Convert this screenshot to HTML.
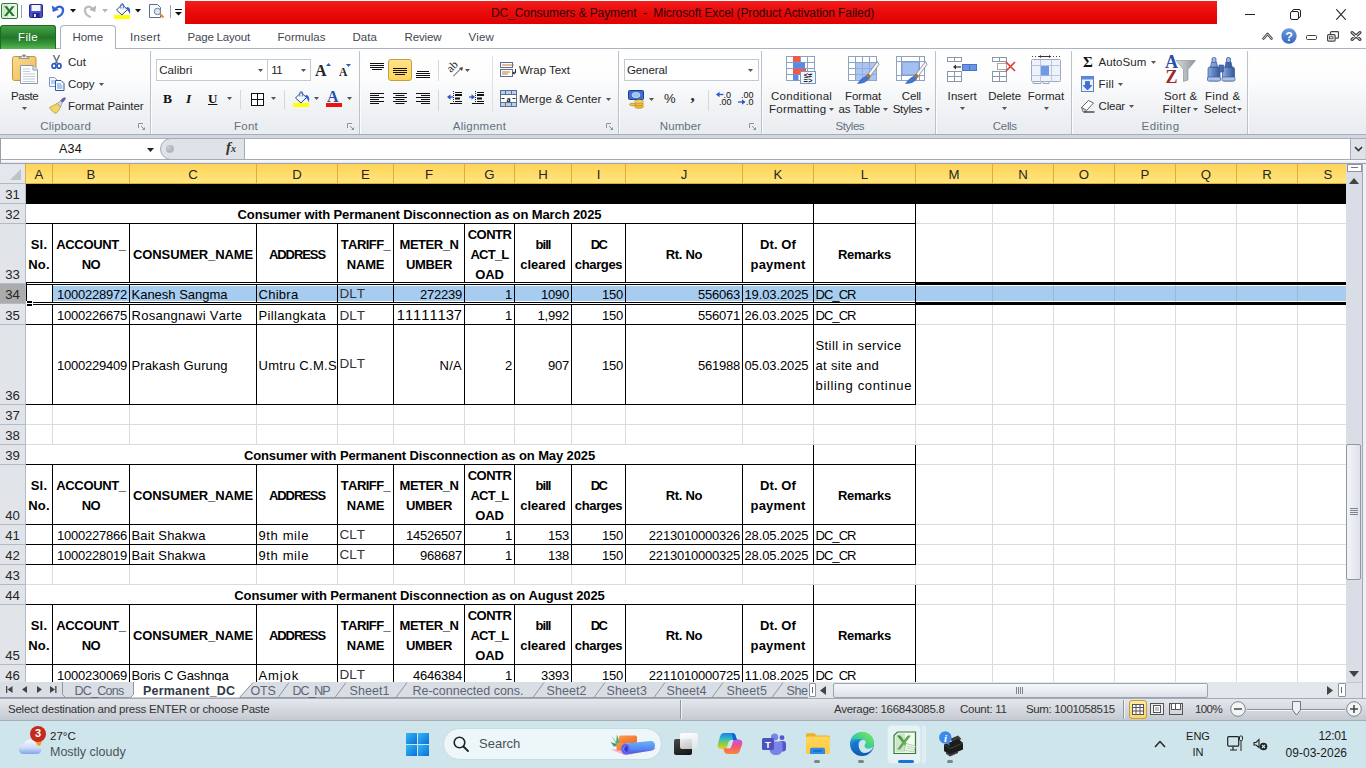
<!DOCTYPE html><html><head><meta charset="utf-8"><title>DC_Consumers &amp; Payment - Microsoft Excel</title><style>
*{box-sizing:border-box;margin:0;padding:0}
html,body{width:1366px;height:768px;overflow:hidden;background:#fff}
body{position:relative;font-family:"Liberation Sans",sans-serif;font-size:12px;color:#1e1e1e}
.a{position:absolute}
.t{position:absolute;white-space:nowrap;line-height:1}
.u{position:absolute;white-space:nowrap;line-height:14px;height:14px;font-size:11.5px;letter-spacing:-0.25px;color:#262626}
.gl2{position:absolute;top:51px;width:2px;height:83px;background:linear-gradient(90deg,#bcc2cb 50%,#fbfcfd 50%)}
.c{position:absolute;font-kerning:none;display:flex;align-items:flex-end;font-size:13px;color:#000;white-space:nowrap;overflow:hidden;line-height:16px;padding-bottom:0}
.c.n{letter-spacing:-0.22px}
.c.x{letter-spacing:0.28px}
.c.r{justify-content:flex-end;padding-right:2px}
.c.l{justify-content:flex-start;padding-left:1.5px}
.c.m{align-items:center;padding-bottom:0;padding-top:2px}
.c.h{align-items:center;justify-content:center;text-align:center;font-weight:bold;white-space:normal;line-height:20px;padding-top:2px;font-size:13px;letter-spacing:-0.18px}
.c.tt{justify-content:center;font-weight:bold;font-size:13px;letter-spacing:-0.11px}
.c.ar{color:#333;font-size:13.5px;letter-spacing:0}
.rh{position:absolute;left:0;width:25px;display:flex;align-items:flex-end;justify-content:center;font-size:13.2px;color:#262626;line-height:15px;padding-bottom:1px}
.ch{position:absolute;top:164px;height:20px;display:flex;align-items:center;justify-content:center;font-size:13.2px;color:#262626;border-right:1px solid #e5a83a;border-bottom:1px solid #e5a83a;background:linear-gradient(#ffd358,#ffdc6b 50%,#ffe57f);padding-top:2px}
.gl{position:absolute;background:#d9dbdf}
.bl{position:absolute;background:#000}
</style></head><body>
<div class="a" style="left:0;top:0;width:1366px;height:25px;background:#fff"></div>
<div class="a" style="left:185px;top:1px;width:1032px;height:23px;background:linear-gradient(#f21d1d,#ea0c0c 45%,#e00000)"></div>
<div class="t" style="left:491px;top:7px;font-size:12px;color:#2a0606;letter-spacing:-0.09px;white-space:pre">DC_Consumers &amp; Payment  -  Microsoft Excel (Product Activation Failed)</div>
<svg class="a" style="left:1px;top:3px" width="17" height="16" viewBox="0 0 17 16"><rect x="0.5" y="0.5" width="16" height="15" rx="1.5" fill="#e9f3e6" stroke="#2f7d32"/><rect x="1.5" y="1.5" width="6" height="13" fill="#cfe5c9"/><path d="M3.2 3.2L7 8 3 13h2.8L8.4 9.6 11 13h2.8L9.9 8l3.7-4.8h-2.8L8.4 6.4 6 3.2z" fill="#1f7a2a"/></svg>
<div class="a" style="left:21px;top:5px;width:1px;height:13px;background:#9aa3ad"></div>
<svg class="a" style="left:29px;top:4px" width="14" height="14" viewBox="0 0 14 14"><rect x="0.5" y="0.5" width="13" height="13" rx="1" fill="#4a4fc4" stroke="#23278a"/><rect x="2.5" y="1" width="9" height="6" fill="#f4f4fb"/><rect x="3.5" y="9" width="7" height="4.5" fill="#23278a"/><rect x="5" y="10" width="2" height="3" fill="#dfe0f5"/></svg>
<svg class="a" style="left:51px;top:3px" width="15" height="15" viewBox="0 0 15 15"><path d="M4.500 6C7 2.500 12.500 3 12 8c-.3 2.800-2.500 4.800-5 5.800" fill="none" stroke="#2f66d4" stroke-width="2.300" stroke-linecap="round"/><path d="M.8 2.500l1 6.500 6-2.200z" fill="#2f66d4"/></svg>
<svg class="a" style="left:70px;top:9px" width="6" height="4"><path d="M0 0h6L3 3.500z" fill="#111"/></svg>
<svg class="a" style="left:82px;top:3px" width="15" height="15" viewBox="0 0 15 15"><path d="M10.500 6C8 2.500 2.500 3 3 8c.3 2.800 2.500 4.800 5 5.800" fill="none" stroke="#bdbdbd" stroke-width="2.300" stroke-linecap="round"/><path d="M14.200 2.500l-1 6.500-6-2.200z" fill="#b5b5b5"/></svg>
<svg class="a" style="left:102px;top:9px" width="6" height="4"><path d="M0 0h6L3 3.500z" fill="#b5b5b5"/></svg>
<svg class="a" style="left:114px;top:2px" width="17" height="17" viewBox="0 0 17 17"><defs><linearGradient id="bk1" x1="0" y1="0" x2="1" y2="1"><stop offset="0" stop-color="#fff"/><stop offset=".6" stop-color="#f4f7fc"/><stop offset="1" stop-color="#9db8e6"/></linearGradient></defs><rect x="0" y="13" width="16" height="4" fill="#ffff00"/><path d="M2.500 8L8 2.500l5.500 5L8 13z" fill="url(#bk1)" stroke="#2b4a8a" stroke-width="1"/><path d="M7 6.500C5.500 2.500 8 .5 9.500 2.500c.8 1.200 0 2.500-.5 4" fill="none" stroke="#5a78aa" stroke-width="1.100"/><path d="M12.500 5c3-.5 4.500 2.500 3.300 7.500-.5-2-1.300-3-2.300-4.200z" fill="#2f62d0"/></svg>
<svg class="a" style="left:135px;top:9px" width="6" height="4"><path d="M0 0h6L3 3.5z" fill="#111"/></svg>
<svg class="a" style="left:149px;top:4px" width="16" height="15" viewBox="0 0 16 15"><path d="M.5.500h8l3 3v10h-11z" fill="#fdfdfd" stroke="#5a6d8c"/><circle cx="8.500" cy="7.500" r="3.200" fill="#dbe9f7" stroke="#6c7f9c"/><path d="M11 10l3.500 3.500" stroke="#d9902f" stroke-width="2"/></svg>
<div class="a" style="left:170px;top:5px;width:1px;height:13px;background:#9aa3ad"></div>
<div class="a" style="left:175px;top:9px;width:7px;height:1px;background:#111"></div>
<svg class="a" style="left:175px;top:12px" width="7" height="4"><path d="M0 0h7L3.5 3.500z" fill="#111"/></svg>
<div class="a" style="left:1245px;top:14px;width:10px;height:1px;background:#222"></div>
<svg class="a" style="left:1289.5px;top:8.5px" width="11" height="11" viewBox="0 0 11 11"><rect x="0.5" y="2.5" width="8" height="8" rx="1.5" fill="none" stroke="#222"/><path d="M2.5 2.5V2A1.500 1.500 0 014 .5h5A1.500 1.500 0 0110.500 2v5A1.500 1.500 0 019 8.500H8.500" fill="none" stroke="#222"/></svg>
<svg class="a" style="left:1336px;top:8.500px" width="10" height="11" viewBox="0 0 10 11"><path d="M.3.300l9.400 10.400M9.700.300L.300 10.700" stroke="#222" stroke-width="1.100"/></svg>
<div class="a" style="left:0;top:25px;width:1366px;height:23px;background:#fff"></div>
<div class="a" style="left:0;top:48px;width:1366px;height:1px;background:#aab3c0"></div>
<div class="a" style="left:0;top:25px;width:56px;height:24px;border-radius:3px 3px 0 0;background:linear-gradient(#47a047 0%,#2f8a33 30%,#23782a 50%,#35933a 75%,#5cb84f 100%);border:1px solid #1d6a22;border-bottom:none"></div>
<div class="u" style="left:18.0px;top:30px;font-size:11.5px;letter-spacing:0.37px;color:#fff">File</div>
<div class="a" style="left:60px;top:25px;width:56px;height:24px;border:1px solid #aab3c0;border-bottom:none;border-radius:4px 4px 0 0;background:#fff"></div>
<div class="u" style="left:72.5px;top:30px;font-size:11.5px;letter-spacing:-0.04px;color:#3f4752">Home</div>
<div class="u" style="left:130.0px;top:30px;font-size:11.5px;letter-spacing:0.29px;color:#3f4752">Insert</div>
<div class="u" style="left:187.5px;top:30px;font-size:11.5px;letter-spacing:-0.19px;color:#3f4752">Page Layout</div>
<div class="u" style="left:277.5px;top:30px;font-size:11.5px;letter-spacing:0.01px;color:#3f4752">Formulas</div>
<div class="u" style="left:352.5px;top:30px;font-size:11.5px;letter-spacing:0.05px;color:#3f4752">Data</div>
<div class="u" style="left:404.5px;top:30px;font-size:11.5px;letter-spacing:-0.12px;color:#3f4752">Review</div>
<div class="u" style="left:468.5px;top:30px;font-size:11.5px;letter-spacing:0.20px;color:#3f4752">View</div>
<svg class="a" style="left:1262px;top:32px" width="11" height="9" viewBox="0 0 11 9"><path d="M1.500 6.500L5.500 2l4 4.500" fill="none" stroke="#444" stroke-width="2.600" stroke-linejoin="round" stroke-linecap="round"/><path d="M1.500 6.500L5.500 2l4 4.500" fill="none" stroke="#fff" stroke-width=".8" stroke-linejoin="round" stroke-linecap="round"/></svg>
<svg class="a" style="left:1281px;top:28px" width="16" height="16" viewBox="0 0 16 16"><defs><linearGradient id="hg" x1="0" y1="0" x2="0" y2="1"><stop offset="0" stop-color="#6b9be0"/><stop offset="1" stop-color="#3468c0"/></linearGradient></defs><circle cx="8" cy="8" r="7.700" fill="url(#hg)"/><text x="8" y="12.500" font-family="Liberation Sans,sans-serif" font-size="12.500" font-weight="bold" fill="#fff" text-anchor="middle">?</text></svg>
<div class="a" style="left:1306px;top:35px;width:11px;height:5px;border:1.300px solid #444;border-radius:1.500px"></div>
<svg class="a" style="left:1327px;top:31px" width="12" height="11" viewBox="0 0 12 11"><rect x="0.600" y="3.600" width="7.500" height="6.500" rx="1" fill="#fff" stroke="#444" stroke-width="1.200"/><path d="M3.500 3.500V1.600a1 1 0 011-1h6a1 1 0 011 1v4.500a1 1 0 01-1 1H8.500" fill="none" stroke="#444" stroke-width="1.200"/><rect x="2.500" y="5.800" width="3.500" height="2" fill="none" stroke="#444" stroke-width=".9"/></svg>
<svg class="a" style="left:1350px;top:31px" width="12" height="10" viewBox="0 0 12 10"><path d="M2 1.500l8 7M10 1.500l-8 7" stroke="#444" stroke-width="3" stroke-linecap="round"/><path d="M2 1.500l8 7M10 1.500l-8 7" stroke="#fff" stroke-width=".9" stroke-linecap="round"/></svg>
<div class="a" style="left:0;top:49px;width:1366px;height:86px;background:linear-gradient(#fff 0%,#fdfdfe 35%,#f2f4f6 62%,#e9ecf0 100%)"></div>
<div class="a" style="left:0;top:134px;width:1366px;height:1px;background:#a7aeb9"></div>
<div class="a" style="left:0;top:135px;width:1366px;height:2px;background:#dfe3e9"></div>
<div class="gl2" style="left:150px"></div>
<div class="gl2" style="left:359px"></div>
<div class="gl2" style="left:618px"></div>
<div class="gl2" style="left:761px"></div>
<div class="gl2" style="left:935px"></div>
<div class="gl2" style="left:1071px"></div>
<div class="gl2" style="left:1247px"></div>
<div class="u" style="left:40.3px;top:119px;font-size:11.5px;letter-spacing:0.16px;color:#66707f">Clipboard</div>
<div class="u" style="left:234.1px;top:119px;font-size:11.5px;letter-spacing:0.20px;color:#66707f">Font</div>
<div class="u" style="left:452.7px;top:119px;font-size:11.5px;letter-spacing:0.27px;color:#66707f">Alignment</div>
<div class="u" style="left:659.8px;top:119px;font-size:11.5px;letter-spacing:0.07px;color:#66707f">Number</div>
<div class="u" style="left:835.4px;top:119px;font-size:11.5px;letter-spacing:-0.42px;color:#66707f">Styles</div>
<div class="u" style="left:992.8px;top:119px;font-size:11.5px;letter-spacing:-0.31px;color:#66707f">Cells</div>
<div class="u" style="left:1141.6px;top:119px;font-size:11.5px;letter-spacing:0.38px;color:#66707f">Editing</div>
<svg class="a" style="left:138px;top:123px" width="8" height="8" viewBox="0 0 8 8"><path d="M.500 5V.500H5" fill="none" stroke="#8a93a0"/><path d="M3 3l3.500 3.500" stroke="#8a93a0"/><path d="M7 4v3H4z" fill="#8a93a0"/></svg>
<svg class="a" style="left:347px;top:123px" width="8" height="8" viewBox="0 0 8 8"><path d="M.500 5V.500H5" fill="none" stroke="#8a93a0"/><path d="M3 3l3.500 3.500" stroke="#8a93a0"/><path d="M7 4v3H4z" fill="#8a93a0"/></svg>
<svg class="a" style="left:606px;top:123px" width="8" height="8" viewBox="0 0 8 8"><path d="M.500 5V.500H5" fill="none" stroke="#8a93a0"/><path d="M3 3l3.500 3.500" stroke="#8a93a0"/><path d="M7 4v3H4z" fill="#8a93a0"/></svg>
<svg class="a" style="left:749px;top:123px" width="8" height="8" viewBox="0 0 8 8"><path d="M.500 5V.500H5" fill="none" stroke="#8a93a0"/><path d="M3 3l3.500 3.500" stroke="#8a93a0"/><path d="M7 4v3H4z" fill="#8a93a0"/></svg>
<svg class="a" style="left:11px;top:53px" width="28" height="32" viewBox="0 0 28 32"><defs><linearGradient id="cbg" x1="0" y1="0" x2="1" y2="1"><stop offset="0" stop-color="#fbdc90"/><stop offset="1" stop-color="#efb754"/></linearGradient></defs><rect x="1.500" y="3.500" width="23.500" height="24" rx="2" fill="url(#cbg)" stroke="#c9963c"/><path d="M8 5.500V4h2.500c0-3 5-3 5 0H18v1.500z" fill="#e3e6ea" stroke="#7c8694" stroke-width=".8"/><circle cx="13" cy="3" r=".9" fill="#8a5a2a"/><path d="M9.500 12.500h12.500l4.500 4.500v13.500h-17z" fill="#fdfdfe" stroke="#8a97a8"/><path d="M22 12.500v4.500h4.500" fill="#e4e9f0" stroke="#8a97a8"/><path d="M12 16h7M12 18.500h7M12 21h12M12 23.500h12M12 26h12M12 28.500h12" stroke="#b9c6d6" stroke-width=".9"/></svg>
<div class="u" style="left:10.9px;top:89px;font-size:11.5px;letter-spacing:-0.40px;">Paste</div>
<svg class="a" style="left:22px;top:107px" width="5" height="3"><path d="M0 0h5L2.500 3z" fill="#555"/></svg>
<svg class="a" style="left:51px;top:55px" width="11" height="14" viewBox="0 0 11 14"><path d="M2.500 0L6.500 8.500M8.500 0L4.500 8.500" stroke="#6a737e" stroke-width="1.500" fill="none"/><ellipse cx="3" cy="11" rx="2" ry="2.300" fill="none" stroke="#2b57c4" stroke-width="1.700"/><ellipse cx="8" cy="11" rx="2" ry="2.300" fill="none" stroke="#2b57c4" stroke-width="1.700"/></svg>
<div class="u" style="left:68.0px;top:55px;font-size:11.5px;letter-spacing:0.07px;">Cut</div>
<svg class="a" style="left:49px;top:76px" width="16" height="16" viewBox="0 0 16 16"><path d="M.500 1.500h5l2.500 2.500v6.500h-7.500z" fill="#f4f8fd" stroke="#7f97c4"/><path d="M2 5h4M2 7h4" stroke="#7fa5e0"/><path d="M6.500 4.500h5.500l3 3v7h-8.500z" fill="#fff" stroke="#2b57a4"/><path d="M8 8h4M8 10h5.500M8 12h5.500" stroke="#5f8fdc"/></svg>
<div class="u" style="left:68.0px;top:77px;font-size:11.5px;letter-spacing:-0.09px;">Copy</div>
<svg class="a" style="left:99px;top:83px" width="5" height="3"><path d="M0 0h5L2.500 3z" fill="#555"/></svg>
<svg class="a" style="left:49px;top:97px" width="17" height="17" viewBox="0 0 17 17"><path d="M16.500 1c-1.500-.8-3 .2-5 3l1.800 1.500c1.700-1.500 3-2.800 3.200-4.500z" fill="#6a5fb0" stroke="#4e4580" stroke-width=".5"/><path d="M11.500 4L8 6.500l3.500 3.500L13.300 5.500z" fill="#d4d7dc" stroke="#7d838c" stroke-width=".6"/><path d="M8 6.500L.500 10.500c1.500 3 4 5 6.500 6 2-2 3.500-4 4.500-6.500z" fill="#f0d66a" stroke="#b0902a" stroke-width=".7"/></svg>
<div class="u" style="left:68.0px;top:99px;font-size:11.5px;letter-spacing:-0.03px;">Format Painter</div>
<div class="a" style="left:156px;top:59px;width:112px;height:22px;background:#fff;border:1px solid #c3cad4"></div>
<div class="a" style="left:267px;top:59px;width:44px;height:22px;background:#fff;border:1px solid #c3cad4"></div>
<div class="u" style="left:159.2px;top:63px;font-size:11.5px;letter-spacing:0.07px;">Calibri</div>
<svg class="a" style="left:258px;top:69px" width="5" height="3"><path d="M0 0h5L2.500 3z" fill="#555"/></svg>
<div class="u" style="left:271.3px;top:63px;font-size:11.5px;letter-spacing:-0.62px;">11</div>
<svg class="a" style="left:301px;top:69px" width="5" height="3"><path d="M0 0h5L2.500 3z" fill="#555"/></svg>
<div class="t" style="left:315px;top:63px;font-family:'Liberation Serif',serif;font-weight:bold;font-size:16px;color:#222">A</div>
<svg class="a" style="left:325.5px;top:63px" width="5" height="3" viewBox="0 0 5 3"><path d="M0 3h5L2.500 0z" fill="#2b57c4"/></svg>
<div class="t" style="left:339px;top:67px;font-family:'Liberation Serif',serif;font-weight:bold;font-size:11.5px;color:#222">A</div>
<svg class="a" style="left:346px;top:64px" width="5" height="3" viewBox="0 0 5 3"><path d="M0 0h5L2.500 3z" fill="#2b57c4"/></svg>
<div class="t" style="left:163px;top:92px;font-family:'Liberation Serif',serif;font-weight:bold;font-size:13.5px;color:#111">B</div>
<div class="t" style="left:186px;top:92px;font-family:'Liberation Serif',serif;font-style:italic;font-weight:bold;font-size:13.5px;color:#111">I</div>
<div class="t" style="left:208px;top:92px;font-family:'Liberation Serif',serif;font-weight:bold;font-size:13px;color:#111;text-decoration:underline">U</div>
<svg class="a" style="left:227px;top:97px" width="5" height="3"><path d="M0 0h5L2.500 3z" fill="#555"/></svg>
<div class="a" style="left:240px;top:90px;width:1px;height:19px;background:#d3d8df"></div>
<svg class="a" style="left:251px;top:93px" width="13" height="13" viewBox="0 0 13 13"><rect x="0.500" y="0.500" width="12" height="12" fill="#fff" stroke="#111"/><path d="M6.500 0v13M0 6.500h13" stroke="#111"/></svg>
<svg class="a" style="left:271px;top:97px" width="5" height="3"><path d="M0 0h5L2.500 3z" fill="#555"/></svg>
<div class="a" style="left:284px;top:90px;width:1px;height:19px;background:#d3d8df"></div>
<svg class="a" style="left:293px;top:90px" width="17" height="17" viewBox="0 0 17 17"><defs><linearGradient id="bk2" x1="0" y1="0" x2="1" y2="1"><stop offset="0" stop-color="#fff"/><stop offset=".6" stop-color="#f4f7fc"/><stop offset="1" stop-color="#9db8e6"/></linearGradient></defs><rect x="0" y="13" width="16" height="4" fill="#ffff00"/><path d="M2.500 8L8 2.500l5.500 5L8 13z" fill="url(#bk2)" stroke="#2b4a8a" stroke-width="1"/><path d="M7 6.500C5.500 2.500 8 .5 9.500 2.500c.8 1.200 0 2.500-.5 4" fill="none" stroke="#5a78aa" stroke-width="1.100"/><path d="M12.500 5c3-.5 4.500 2.500 3.300 7.500-.5-2-1.300-3-2.300-4.200z" fill="#2f62d0"/></svg>
<svg class="a" style="left:314px;top:97px" width="5" height="3"><path d="M0 0h5L2.500 3z" fill="#555"/></svg>
<div class="t" style="left:327px;top:89px;font-family:'Liberation Serif',serif;font-weight:bold;font-size:16px;color:#2b4fa8">A</div>
<div class="a" style="left:326px;top:103px;width:16px;height:4px;background:#ee1111"></div>
<svg class="a" style="left:347px;top:97px" width="5" height="3"><path d="M0 0h5L2.500 3z" fill="#555"/></svg>
<div class="a" style="left:388px;top:59px;width:24px;height:22px;border:1px solid #c2a03c;border-radius:3px;background:linear-gradient(#ffe38c,#ffd356)"></div>
<svg class="a" style="left:370px;top:63px" width="14" height="8" viewBox="0 0 14 8"><rect x="0" y="0" width="14" height="1" fill="#111"/><rect x="0" y="2" width="14" height="1" fill="#111"/><rect x="0" y="4" width="14" height="1" fill="#111"/><rect x="2.0" y="6" width="10" height="1" fill="#111"/></svg>
<svg class="a" style="left:393px;top:67.5px" width="14" height="8" viewBox="0 0 14 8"><rect x="0" y="0" width="14" height="1" fill="#111"/><rect x="0" y="2" width="14" height="1" fill="#111"/><rect x="0" y="4" width="14" height="1" fill="#111"/><rect x="2.0" y="6" width="10" height="1" fill="#111"/></svg>
<svg class="a" style="left:416px;top:70.5px" width="14" height="8" viewBox="0 0 14 8"><rect x="1.0" y="0" width="12" height="1" fill="#111"/><rect x="0" y="2" width="14" height="1" fill="#111"/><rect x="0" y="4" width="14" height="1" fill="#111"/><rect x="0" y="6" width="14" height="1" fill="#111"/></svg>
<div class="a" style="left:438px;top:60px;width:1px;height:21px;background:#d3d8df"></div>
<div class="t" style="left:447px;top:61px;font-size:11.5px;color:#222;transform:rotate(-45deg);font-family:'Liberation Serif',serif">ab</div>
<svg class="a" style="left:453px;top:67px" width="11" height="10" viewBox="0 0 11 10"><path d="M0 9.500L8 1.500" stroke="#444"/><path d="M10 0L6 1 9 4z" fill="#444"/></svg>
<svg class="a" style="left:465px;top:69px" width="5" height="3"><path d="M0 0h5L2.500 3z" fill="#555"/></svg>
<svg class="a" style="left:370px;top:93px" width="14" height="12" viewBox="0 0 14 12"><rect x="0" y="0" width="14" height="1" fill="#111"/><rect x="0" y="2" width="9" height="1" fill="#111"/><rect x="0" y="4" width="14" height="1" fill="#111"/><rect x="0" y="6" width="9" height="1" fill="#111"/><rect x="0" y="8" width="14" height="1" fill="#111"/><rect x="0" y="10" width="9" height="1" fill="#111"/></svg>
<svg class="a" style="left:393px;top:93px" width="14" height="12" viewBox="0 0 14 12"><rect x="0.0" y="0" width="14" height="1" fill="#111"/><rect x="2.5" y="2" width="9" height="1" fill="#111"/><rect x="0.0" y="4" width="14" height="1" fill="#111"/><rect x="2.5" y="6" width="9" height="1" fill="#111"/><rect x="0.0" y="8" width="14" height="1" fill="#111"/><rect x="2.5" y="10" width="9" height="1" fill="#111"/></svg>
<svg class="a" style="left:416px;top:93px" width="14" height="12" viewBox="0 0 14 12"><rect x="0" y="0" width="14" height="1" fill="#111"/><rect x="5" y="2" width="9" height="1" fill="#111"/><rect x="0" y="4" width="14" height="1" fill="#111"/><rect x="5" y="6" width="9" height="1" fill="#111"/><rect x="0" y="8" width="14" height="1" fill="#111"/><rect x="5" y="10" width="9" height="1" fill="#111"/></svg>
<div class="a" style="left:438px;top:90px;width:1px;height:21px;background:#d3d8df"></div>
<svg class="a" style="left:447px;top:91px" width="16" height="14" viewBox="0 0 16 14"><rect x="8" y="1" width="7" height="1" fill="#111"/><rect x="8" y="3" width="7" height="2" fill="#111"/><rect x="8" y="6.500" width="5" height="2" fill="#111"/><rect x="8" y="10" width="7" height="1" fill="#111"/><rect x="3" y="12" width="12" height="1" fill="#111"/><path d="M6.500 0v14" stroke="#222" stroke-dasharray="1 1"/><path d="M6 6H2" stroke="#2b57c4" stroke-width="1.300"/><path d="M0 6l3.500-2.800v5.600z" fill="#2b57c4"/></svg>
<svg class="a" style="left:469px;top:91px" width="16" height="14" viewBox="0 0 16 14"><rect x="8" y="1" width="7" height="1" fill="#111"/><rect x="8" y="3" width="7" height="2" fill="#111"/><rect x="8" y="6.500" width="5" height="2" fill="#111"/><rect x="8" y="10" width="7" height="1" fill="#111"/><rect x="3" y="12" width="12" height="1" fill="#111"/><path d="M6.500 0v14" stroke="#222" stroke-dasharray="1 1"/><path d="M0 6h4" stroke="#2b57c4" stroke-width="1.300"/><path d="M6 6L2.500 3.200v5.600z" fill="#2b57c4"/></svg>
<div class="a" style="left:492px;top:56px;width:1px;height:56px;background:#dde1e7"></div>
<svg class="a" style="left:500px;top:61px" width="17" height="17" viewBox="0 0 17 17"><rect x="0.500" y="1.500" width="12" height="5" fill="#fff" stroke="#5b6f93"/><rect x="0.500" y="8.500" width="12" height="7" fill="#fff" stroke="#5b6f93"/><path d="M2 4h12M2 11h8M2 13h6" stroke="#c77a2a"/><path d="M15.500 8v4h-2" fill="none" stroke="#333"/><path d="M12 12l2.500-1.800v3.600z" fill="#333"/></svg>
<div class="u" style="left:518.9px;top:63px;font-size:11.5px;letter-spacing:-0.04px;">Wrap Text</div>
<svg class="a" style="left:500px;top:90px" width="17" height="17" viewBox="0 0 17 17"><rect x="0.500" y="0.500" width="16" height="16" fill="#b9cff2" stroke="#5b6f93"/><path d="M0 4.500h17M0 12.500h17M5.500 0v4M11.500 0v4M5.500 13v4M11.500 13v4" stroke="#5b6f93"/><rect x="1" y="5" width="15" height="7" fill="#fff"/><text x="8.500" y="11.500" font-family="Liberation Serif,serif" font-weight="bold" font-size="8" text-anchor="middle" fill="#111">a</text><path d="M1.500 8.500h3M15.500 8.500h-3" stroke="#333"/></svg>
<div class="u" style="left:518.9px;top:92px;font-size:11.5px;letter-spacing:0.10px;">Merge &amp; Center</div>
<svg class="a" style="left:606px;top:98px" width="5" height="3"><path d="M0 0h5L2.500 3z" fill="#555"/></svg>
<div class="a" style="left:624px;top:59px;width:135px;height:22px;background:#fff;border:1px solid #c3cad4"></div>
<div class="u" style="left:626.9px;top:63px;font-size:11.5px;letter-spacing:-0.07px;">General</div>
<svg class="a" style="left:748px;top:69px" width="5" height="3"><path d="M0 0h5L2.500 3z" fill="#555"/></svg>
<svg class="a" style="left:628px;top:90px" width="17" height="19" viewBox="0 0 17 19"><rect x="0.500" y="0.500" width="15" height="9" rx="1" fill="#3f6fd0" stroke="#1f3f8a"/><ellipse cx="8" cy="5" rx="4" ry="2.600" fill="#9cc0f0" stroke="#e8f0fb" stroke-width=".6"/><ellipse cx="11" cy="16.500" rx="4.500" ry="1.800" fill="#f0c040" stroke="#a87b10" stroke-width=".6"/><ellipse cx="11" cy="14" rx="4.500" ry="1.800" fill="#f0c040" stroke="#a87b10" stroke-width=".6"/><ellipse cx="11" cy="11.500" rx="4.500" ry="1.800" fill="#f6d56a" stroke="#a87b10" stroke-width=".6"/><ellipse cx="4.500" cy="14.500" rx="3" ry="1.300" fill="#f0c040" stroke="#a87b10" stroke-width=".6"/></svg>
<svg class="a" style="left:649px;top:98px" width="5" height="3"><path d="M0 0h5L2.500 3z" fill="#555"/></svg>
<div class="u" style="left:664px;top:92px;font-size:13px;color:#222">%</div>
<div class="u" style="left:690.5px;top:89px;font-size:17px;font-weight:bold;color:#222;font-family:'Liberation Serif',serif">,</div>
<div class="a" style="left:708px;top:90px;width:1px;height:21px;background:#d3d8df"></div>
<svg class="a" style="left:716px;top:91px" width="18" height="15" viewBox="0 0 18 15"><path d="M2.500 3.500h5" stroke="#2b57c4" stroke-width="1.300"/><path d="M0 3.500l3.500-2.800v5.600z" fill="#2b57c4"/><text x="7.500" y="7" font-family="Liberation Sans,sans-serif" font-size="9" fill="#111">.0</text><text x="3" y="14" font-family="Liberation Sans,sans-serif" font-size="9" fill="#111">.00</text></svg>
<svg class="a" style="left:738px;top:91px" width="18" height="15" viewBox="0 0 18 15"><text x="3" y="7" font-family="Liberation Sans,sans-serif" font-size="9" fill="#111">.00</text><path d="M0 11h5" stroke="#2b57c4" stroke-width="1.300"/><path d="M7.500 11L4 8.200v5.600z" fill="#2b57c4"/><text x="8" y="14" font-family="Liberation Sans,sans-serif" font-size="9" fill="#111">.0</text></svg>
<svg class="a" style="left:786px;top:56px" width="32" height="30" viewBox="0 0 32 30"><rect x="0.500" y="0.500" width="28" height="24" fill="#fff" stroke="#8ea2c2"/><path d="M0 6.500h29M0 12.500h29M0 18.500h29M7.500 0v25M14.500 0v25M21.500 0v25" stroke="#8ea2c2"/><rect x="7" y="0" width="7" height="6" fill="#ee5a4a"/><rect x="7" y="6.500" width="12" height="6" fill="#5b8ae6"/><rect x="7" y="12.500" width="13" height="6" fill="#ee5a4a"/><rect x="7" y="18.500" width="5.500" height="6" fill="#5b8ae6"/><rect x="14.500" y="15.500" width="15" height="12" fill="#f2f6fc" stroke="#7a96c4"/><text x="22" y="21.800" font-family="Liberation Sans,sans-serif" font-size="7.500" font-weight="bold" text-anchor="middle" fill="#222">≤≠</text><text x="22" y="27" font-family="Liberation Sans,sans-serif" font-size="7.500" font-weight="bold" text-anchor="middle" fill="#222">=&gt;</text></svg>
<div class="u" style="left:770.9px;top:89px;font-size:11.5px;letter-spacing:0.35px;">Conditional</div>
<div class="u" style="left:769.0px;top:102px;font-size:11.5px;letter-spacing:0.23px;">Formatting</div>
<svg class="a" style="left:829px;top:108px" width="5" height="3"><path d="M0 0h5L2.500 3z" fill="#555"/></svg>
<svg class="a" style="left:848px;top:56px" width="32" height="30" viewBox="0 0 32 30"><rect x="0.500" y="0.500" width="28" height="24" fill="#fff" stroke="#8ea2c2"/><path d="M0 6.500h29M0 12.500h29M0 18.500h29M7.500 0v25M14.500 0v25M21.500 0v25" stroke="#8ea2c2"/><rect x="8" y="7" width="20" height="17.500" fill="#8fb0ee" opacity=".75"/><path d="M29.500 5.500L20 18l2.500 2L31 8.500z" fill="#f4f4f4" stroke="#6f747c" stroke-width=".7"/><path d="M20 18l-2.500 2.500 3 2.500 2-3z" fill="#a87a3a" stroke="#7a5520" stroke-width=".5"/><path d="M17.500 20.500c-3 1-5 3.500-8 7 5 0 9-1.500 11-4.500z" fill="#3f76d8" stroke="#2a55a8" stroke-width=".5"/></svg>
<div class="u" style="left:845.1px;top:89px;font-size:11.5px;letter-spacing:-0.07px;">Format</div>
<div class="u" style="left:838.5px;top:102px;font-size:11.5px;letter-spacing:-0.15px;">as Table</div>
<svg class="a" style="left:883px;top:108px" width="5" height="3"><path d="M0 0h5L2.500 3z" fill="#555"/></svg>
<svg class="a" style="left:896px;top:56px" width="32" height="30" viewBox="0 0 32 30"><rect x="0.500" y="0.500" width="28" height="24" fill="#fff" stroke="#8ea2c2"/><path d="M0 5.500h29M0 19.500h29M5.500 0v25M23.500 0v25" stroke="#8ea2c2"/><rect x="6" y="6" width="17" height="13" fill="#a4c0f2" stroke="#6f94dc" stroke-width=".8"/><path d="M29.500 5.500L20 18l2.500 2L31 8.500z" fill="#f4f4f4" stroke="#6f747c" stroke-width=".7"/><path d="M20 18l-2.500 2.500 3 2.500 2-3z" fill="#a87a3a" stroke="#7a5520" stroke-width=".5"/><path d="M17.500 20.500c-3 1-5 3.500-8 7 5 0 9-1.500 11-4.500z" fill="#3f76d8" stroke="#2a55a8" stroke-width=".5"/></svg>
<div class="u" style="left:901.8px;top:89px;font-size:11.5px;letter-spacing:-0.15px;">Cell</div>
<div class="u" style="left:892.7px;top:102px;font-size:11.5px;letter-spacing:-0.30px;">Styles</div>
<svg class="a" style="left:925px;top:108px" width="5" height="3"><path d="M0 0h5L2.500 3z" fill="#555"/></svg>
<svg class="a" style="left:947px;top:57px" width="32" height="27" viewBox="0 0 32 27"><rect x="0.500" y="0.500" width="14" height="4" fill="#fff" stroke="#8a97ab"/><path d="M7.500 0v5" stroke="#8a97ab"/><rect x="0.500" y="14.500" width="14" height="10" fill="#fff" stroke="#8a97ab"/><path d="M7.500 14v11M0 19.500h15" stroke="#8a97ab"/><rect x="15.500" y="7.500" width="14" height="6" fill="#6a94e6" stroke="#4a72c8"/><path d="M22.500 7.500v6" stroke="#4a72c8"/><path d="M14 10H8" stroke="#333" stroke-width="1.200"/><path d="M6 10l3-2.500v5z" fill="#333"/></svg>
<div class="u" style="left:947.6px;top:89px;font-size:11.5px;letter-spacing:0.09px;">Insert</div>
<svg class="a" style="left:960px;top:107px" width="5" height="3"><path d="M0 0h5L2.500 3z" fill="#555"/></svg>
<svg class="a" style="left:991px;top:57px" width="28" height="27" viewBox="0 0 28 27"><rect x="1.500" y="0.500" width="14" height="4" fill="#fff" stroke="#8a97ab"/><path d="M8.500 0v5" stroke="#8a97ab"/><rect x="1.500" y="14.500" width="14" height="10" fill="#fff" stroke="#8a97ab"/><path d="M8.500 14v11M1 19.500h15" stroke="#8a97ab"/><rect x="6.500" y="6.500" width="9" height="6" fill="#fff" stroke="#555" stroke-dasharray="1 1"/><path d="M15 5l9 9M24 5l-9 9" stroke="#e23b2e" stroke-width="1.600"/></svg>
<div class="u" style="left:988.2px;top:89px;font-size:11.5px;letter-spacing:-0.06px;">Delete</div>
<svg class="a" style="left:1002px;top:107px" width="5" height="3"><path d="M0 0h5L2.500 3z" fill="#555"/></svg>
<svg class="a" style="left:1031px;top:55px" width="32" height="30" viewBox="0 0 32 30"><path d="M1 1.500h28" stroke="#444" stroke-dasharray="1 2"/><path d="M8 1.500h12" stroke="#333"/><path d="M8 1.500l2-1.500v3zM20 1.500l-2-1.500v3z" fill="#333"/><rect x="0.500" y="4.500" width="29" height="22" rx="1" fill="#eef3fb" stroke="#9aa8c0"/><path d="M0 10.500h30M0 20.500h30M9.500 5v22M20.500 5v22" stroke="#b9c6dc"/><rect x="10" y="11" width="8" height="9.500" fill="#7099e8"/><path d="M2 26.500v2h8v-2M12 26.500v2h6v-2" fill="none" stroke="#9aa8c0"/></svg>
<div class="u" style="left:1027.8px;top:89px;font-size:11.5px;letter-spacing:-0.02px;">Format</div>
<svg class="a" style="left:1044px;top:107px" width="5" height="3"><path d="M0 0h5L2.500 3z" fill="#555"/></svg>
<div class="t" style="left:1083px;top:55px;font-size:15px;font-weight:bold;color:#111;font-family:'Liberation Serif',serif">Σ</div>
<div class="u" style="left:1098.6px;top:55px;font-size:11.5px;letter-spacing:0.06px;">AutoSum</div>
<svg class="a" style="left:1151px;top:61px" width="5" height="3"><path d="M0 0h5L2.500 3z" fill="#555"/></svg>
<svg class="a" style="left:1081px;top:76px" width="13" height="16" viewBox="0 0 13 16"><rect x="0.500" y="0.500" width="12" height="15" fill="#eaf1fb" stroke="#5f82c4"/><rect x="1" y="1" width="11" height="2.500" fill="#5b8ae6"/><path d="M4.500 5.500h4v4h2.300L6.500 14 2.200 9.500H4.500z" fill="#3a6fdc" stroke="#1c3f9a" stroke-width=".5"/></svg>
<div class="u" style="left:1098.6px;top:77px;font-size:11.5px;letter-spacing:0.20px;">Fill</div>
<svg class="a" style="left:1118px;top:83px" width="5" height="3"><path d="M0 0h5L2.500 3z" fill="#555"/></svg>
<svg class="a" style="left:1080px;top:99px" width="16" height="14" viewBox="0 0 16 14"><path d="M1.500 8.500L8.500 1.500l5 2.500-7 7.500z" fill="#fdfdfe" stroke="#555" stroke-width=".9"/><path d="M1.500 8.500l5 3-1 1.500H3z" fill="#e9c8d0" stroke="#555" stroke-width=".7"/><path d="M4 13h10.500" stroke="#222" stroke-width="1.200"/></svg>
<div class="u" style="left:1098.6px;top:99px;font-size:11.5px;letter-spacing:-0.22px;">Clear</div>
<svg class="a" style="left:1129px;top:105px" width="5" height="3"><path d="M0 0h5L2.500 3z" fill="#555"/></svg>
<svg class="a" style="left:1165px;top:52px" width="32" height="34" viewBox="0 0 32 34"><defs><linearGradient id="fng" x1="0" y1="0" x2="1" y2="0"><stop offset="0" stop-color="#d9dbdf"/><stop offset=".5" stop-color="#b5b8be"/><stop offset="1" stop-color="#8f9399"/></linearGradient></defs><path d="M11 8.500h19.500l-7.500 9v10.500l-4.500 1.500V17.500z" fill="url(#fng)" stroke="#85898f" stroke-width=".6"/><text x="0" y="16" font-family="Liberation Serif,serif" font-weight="bold" font-size="18" fill="#2b4fa8">A</text><text x="0.500" y="31" font-family="Liberation Serif,serif" font-weight="bold" font-size="18" fill="#a02828">Z</text></svg>
<div class="u" style="left:1163.9px;top:89px;font-size:11.5px;letter-spacing:0.27px;">Sort &amp;</div>
<div class="u" style="left:1162.6px;top:102px;font-size:11.5px;letter-spacing:0.56px;">Filter</div>
<svg class="a" style="left:1192.5px;top:108px" width="5" height="3"><path d="M0 0h5L2.500 3z" fill="#555"/></svg>
<svg class="a" style="left:1207px;top:56px" width="30" height="27" viewBox="0 0 30 27"><defs><linearGradient id="bng" x1="0" y1="0" x2="1" y2="0"><stop offset="0" stop-color="#8fb0e0"/><stop offset=".45" stop-color="#5f82c0"/><stop offset="1" stop-color="#3a5a98"/></linearGradient></defs><rect x="1" y="11" width="12" height="14" rx="2" fill="url(#bng)" stroke="#34508a" stroke-width=".7"/><rect x="15.500" y="11" width="12" height="14" rx="2" fill="url(#bng)" stroke="#34508a" stroke-width=".7"/><path d="M3.500 11l1-5h5l1 5zM18 11l1-5h5l1 5z" fill="url(#bng)" stroke="#34508a" stroke-width=".7"/><rect x="5" y="1.500" width="4" height="5" rx="1.500" fill="#9ab8e6" stroke="#34508a" stroke-width=".7"/><rect x="19.500" y="1.500" width="4" height="5" rx="1.500" fill="#9ab8e6" stroke="#34508a" stroke-width=".7"/><rect x="12" y="9" width="4.500" height="7" fill="#4a6cae" stroke="#34508a" stroke-width=".6"/><rect x="0.500" y="21" width="13" height="4" rx="1" fill="#a9c2ea" stroke="#34508a" stroke-width=".6"/><rect x="15" y="21" width="13" height="4" rx="1" fill="#a9c2ea" stroke="#34508a" stroke-width=".6"/></svg>
<div class="u" style="left:1204.9px;top:89px;font-size:11.5px;letter-spacing:0.39px;">Find &amp;</div>
<div class="u" style="left:1203.7px;top:102px;font-size:11.5px;letter-spacing:0.07px;">Select</div>
<svg class="a" style="left:1237px;top:108px" width="5" height="3"><path d="M0 0h5L2.500 3z" fill="#555"/></svg>
<div class="a" style="left:0;top:135px;width:1366px;height:29px;background:#d3d8df"></div>
<div class="a" style="left:0;top:138px;width:1366px;height:1px;background:#a9b0bb"></div>
<div class="a" style="left:1px;top:139px;width:1349px;height:20px;background:#fff"></div>
<div class="a" style="left:0;top:159px;width:1366px;height:1px;background:#a3abb6"></div>
<div class="a" style="left:0;top:160px;width:1366px;height:3px;background:linear-gradient(#fdfdff,#e6e9f2)"></div>
<div class="a" style="left:0;top:163px;width:1366px;height:1px;background:#9aa2ae"></div>
<div class="a" style="left:0;top:138px;width:1px;height:26px;background:#9aa0a8"></div>
<div class="a" style="left:160px;top:138px;width:85px;height:22px;background:#dfe2e7;border:1px solid #a3abb6;border-radius:11px 0 0 11px"></div>
<div class="a" style="left:166px;top:145px;width:8px;height:8px;border-radius:4px;background:radial-gradient(circle at 35% 35%,#c9cdd3,#aeb3ba 60%,#e4e6ea)"></div>
<div class="u" style="left:59px;top:142px;font-size:12.500px;letter-spacing:0.2px;color:#111">A34</div>
<svg class="a" style="left:147px;top:148px" width="7" height="4" viewBox="0 0 7 4"><path d="M0 0h7L3.500 4z" fill="#222"/></svg>
<div class="t" style="left:226px;top:140px;font-family:'Liberation Serif',serif;font-style:italic;font-weight:bold;font-size:15px;color:#333">f<span style="font-size:10px">x</span></div>
<div class="a" style="left:1350px;top:139px;width:15px;height:20px;background:#dfe2e7;border-left:1px solid #a9afb8"></div>
<svg class="a" style="left:1353.5px;top:146px" width="9" height="6" viewBox="0 0 9 6"><path d="M1 1l3.500 3.500L8 1" fill="none" stroke="#333" stroke-width="1.600"/></svg>
<div class="a" id="grid" style="left:0;top:164px;width:1346px;height:518px;overflow:hidden;background:#fff">
<div class="a" style="left:0;top:-164px;width:1346px;height:768px">
<div class="gl" style="left:52px;top:184px;width:1px;height:498px"></div>
<div class="gl" style="left:129px;top:184px;width:1px;height:498px"></div>
<div class="gl" style="left:256px;top:184px;width:1px;height:498px"></div>
<div class="gl" style="left:337px;top:184px;width:1px;height:498px"></div>
<div class="gl" style="left:393px;top:184px;width:1px;height:498px"></div>
<div class="gl" style="left:464px;top:184px;width:1px;height:498px"></div>
<div class="gl" style="left:514px;top:184px;width:1px;height:498px"></div>
<div class="gl" style="left:571px;top:184px;width:1px;height:498px"></div>
<div class="gl" style="left:625px;top:184px;width:1px;height:498px"></div>
<div class="gl" style="left:742px;top:184px;width:1px;height:498px"></div>
<div class="gl" style="left:813px;top:184px;width:1px;height:498px"></div>
<div class="gl" style="left:915px;top:184px;width:1px;height:498px"></div>
<div class="gl" style="left:992px;top:184px;width:1px;height:498px"></div>
<div class="gl" style="left:1053px;top:184px;width:1px;height:498px"></div>
<div class="gl" style="left:1114px;top:184px;width:1px;height:498px"></div>
<div class="gl" style="left:1175px;top:184px;width:1px;height:498px"></div>
<div class="gl" style="left:1236px;top:184px;width:1px;height:498px"></div>
<div class="gl" style="left:1297px;top:184px;width:1px;height:498px"></div>
<div class="gl" style="left:26px;top:203px;width:1320px;height:1px"></div>
<div class="gl" style="left:26px;top:223px;width:1320px;height:1px"></div>
<div class="gl" style="left:26px;top:283px;width:1320px;height:1px"></div>
<div class="gl" style="left:26px;top:303px;width:1320px;height:1px"></div>
<div class="gl" style="left:26px;top:324px;width:1320px;height:1px"></div>
<div class="gl" style="left:26px;top:404px;width:1320px;height:1px"></div>
<div class="gl" style="left:26px;top:424px;width:1320px;height:1px"></div>
<div class="gl" style="left:26px;top:444px;width:1320px;height:1px"></div>
<div class="gl" style="left:26px;top:464px;width:1320px;height:1px"></div>
<div class="gl" style="left:26px;top:524px;width:1320px;height:1px"></div>
<div class="gl" style="left:26px;top:544px;width:1320px;height:1px"></div>
<div class="gl" style="left:26px;top:564px;width:1320px;height:1px"></div>
<div class="gl" style="left:26px;top:584px;width:1320px;height:1px"></div>
<div class="gl" style="left:26px;top:604px;width:1320px;height:1px"></div>
<div class="gl" style="left:26px;top:664px;width:1320px;height:1px"></div>
<div class="gl" style="left:26px;top:684px;width:1320px;height:1px"></div>
<div class="a" style="left:26px;top:184px;width:1320px;height:20px;background:#000"></div>
<div class="a" style="left:26px;top:204px;width:787px;height:19px;background:#fff"></div>
<div class="a" style="left:26px;top:445px;width:787px;height:19px;background:#fff"></div>
<div class="a" style="left:26px;top:585px;width:787px;height:19px;background:#fff"></div>
<div class="a" style="left:53px;top:286px;width:1293px;height:15px;background:#a6cdf0"></div>
<div class="a" style="left:915px;top:286px;width:1px;height:15px;background:#98b9d8"></div>
<div class="a" style="left:992px;top:286px;width:1px;height:15px;background:#98b9d8"></div>
<div class="a" style="left:1053px;top:286px;width:1px;height:15px;background:#98b9d8"></div>
<div class="a" style="left:1114px;top:286px;width:1px;height:15px;background:#98b9d8"></div>
<div class="a" style="left:1175px;top:286px;width:1px;height:15px;background:#98b9d8"></div>
<div class="a" style="left:1236px;top:286px;width:1px;height:15px;background:#98b9d8"></div>
<div class="a" style="left:1297px;top:286px;width:1px;height:15px;background:#98b9d8"></div>
<div class="bl" style="left:813px;top:204px;width:1px;height:20px"></div>
<div class="bl" style="left:915px;top:204px;width:1px;height:20px"></div>
<div class="bl" style="left:26px;top:223px;width:890px;height:1px"></div>
<div class="bl" style="left:26px;top:283px;width:890px;height:1px"></div>
<div class="bl" style="left:26px;top:303px;width:890px;height:1px"></div>
<div class="bl" style="left:26px;top:324px;width:890px;height:1px"></div>
<div class="bl" style="left:26px;top:404px;width:890px;height:1px"></div>
<div class="bl" style="left:52px;top:223px;width:1px;height:182px"></div>
<div class="bl" style="left:129px;top:223px;width:1px;height:182px"></div>
<div class="bl" style="left:256px;top:223px;width:1px;height:182px"></div>
<div class="bl" style="left:337px;top:223px;width:1px;height:182px"></div>
<div class="bl" style="left:393px;top:223px;width:1px;height:182px"></div>
<div class="bl" style="left:464px;top:223px;width:1px;height:182px"></div>
<div class="bl" style="left:514px;top:223px;width:1px;height:182px"></div>
<div class="bl" style="left:571px;top:223px;width:1px;height:182px"></div>
<div class="bl" style="left:625px;top:223px;width:1px;height:182px"></div>
<div class="bl" style="left:742px;top:223px;width:1px;height:182px"></div>
<div class="bl" style="left:813px;top:223px;width:1px;height:182px"></div>
<div class="bl" style="left:915px;top:223px;width:1px;height:182px"></div>
<div class="bl" style="left:813px;top:445px;width:1px;height:20px"></div>
<div class="bl" style="left:915px;top:445px;width:1px;height:20px"></div>
<div class="bl" style="left:26px;top:464px;width:890px;height:1px"></div>
<div class="bl" style="left:26px;top:524px;width:890px;height:1px"></div>
<div class="bl" style="left:26px;top:544px;width:890px;height:1px"></div>
<div class="bl" style="left:26px;top:564px;width:890px;height:1px"></div>
<div class="bl" style="left:52px;top:464px;width:1px;height:101px"></div>
<div class="bl" style="left:129px;top:464px;width:1px;height:101px"></div>
<div class="bl" style="left:256px;top:464px;width:1px;height:101px"></div>
<div class="bl" style="left:337px;top:464px;width:1px;height:101px"></div>
<div class="bl" style="left:393px;top:464px;width:1px;height:101px"></div>
<div class="bl" style="left:464px;top:464px;width:1px;height:101px"></div>
<div class="bl" style="left:514px;top:464px;width:1px;height:101px"></div>
<div class="bl" style="left:571px;top:464px;width:1px;height:101px"></div>
<div class="bl" style="left:625px;top:464px;width:1px;height:101px"></div>
<div class="bl" style="left:742px;top:464px;width:1px;height:101px"></div>
<div class="bl" style="left:813px;top:464px;width:1px;height:101px"></div>
<div class="bl" style="left:915px;top:464px;width:1px;height:101px"></div>
<div class="bl" style="left:813px;top:585px;width:1px;height:20px"></div>
<div class="bl" style="left:915px;top:585px;width:1px;height:20px"></div>
<div class="bl" style="left:26px;top:604px;width:890px;height:1px"></div>
<div class="bl" style="left:26px;top:664px;width:890px;height:1px"></div>
<div class="bl" style="left:26px;top:684px;width:890px;height:1px"></div>
<div class="bl" style="left:52px;top:604px;width:1px;height:81px"></div>
<div class="bl" style="left:129px;top:604px;width:1px;height:81px"></div>
<div class="bl" style="left:256px;top:604px;width:1px;height:81px"></div>
<div class="bl" style="left:337px;top:604px;width:1px;height:81px"></div>
<div class="bl" style="left:393px;top:604px;width:1px;height:81px"></div>
<div class="bl" style="left:464px;top:604px;width:1px;height:81px"></div>
<div class="bl" style="left:514px;top:604px;width:1px;height:81px"></div>
<div class="bl" style="left:571px;top:604px;width:1px;height:81px"></div>
<div class="bl" style="left:625px;top:604px;width:1px;height:81px"></div>
<div class="bl" style="left:742px;top:604px;width:1px;height:81px"></div>
<div class="bl" style="left:813px;top:604px;width:1px;height:81px"></div>
<div class="bl" style="left:915px;top:604px;width:1px;height:81px"></div>
<div class="c tt" style="left:26px;top:204px;width:787px;height:19px">Consumer with Permanent Disconnection as on March 2025</div>
<div class="c h" style="left:22px;top:224px;width:34px;height:59px;overflow:visible"><span><span style="letter-spacing:0.20px">Sl.</span><br><span style="letter-spacing:0.19px">No.</span></span></div>
<div class="c h" style="left:49px;top:224px;width:84px;height:59px;overflow:visible"><span><span style="letter-spacing:-0.34px">ACCOUNT_</span><br><span style="letter-spacing:-0.50px">NO</span></span></div>
<div class="c h" style="left:126px;top:224px;width:134px;height:59px;overflow:visible"><span><span style="letter-spacing:-0.10px">CONSUMER_NAME</span></span></div>
<div class="c h" style="left:253px;top:224px;width:88px;height:59px;overflow:visible"><span><span style="letter-spacing:-1.08px">ADDRESS</span></span></div>
<div class="c h" style="left:334px;top:224px;width:63px;height:59px;overflow:visible"><span><span style="letter-spacing:-0.56px">TARIFF_</span><br><span style="letter-spacing:-0.19px">NAME</span></span></div>
<div class="c h" style="left:390px;top:224px;width:78px;height:59px;overflow:visible"><span><span style="letter-spacing:-0.45px">METER_N</span><br><span style="letter-spacing:-0.33px">UMBER</span></span></div>
<div class="c h" style="left:461px;top:224px;width:57px;height:59px;overflow:visible"><span><span style="letter-spacing:-0.54px">CONTR</span><br><span style="letter-spacing:-0.78px">ACT_L</span><br><span style="letter-spacing:-0.13px">OAD</span></span></div>
<div class="c h" style="left:511px;top:224px;width:64px;height:59px;overflow:visible"><span><span style="letter-spacing:-0.94px">bill</span><br><span style="letter-spacing:-0.00px">cleared</span></span></div>
<div class="c h" style="left:568px;top:224px;width:61px;height:59px;overflow:visible"><span><span style="letter-spacing:-1.64px">DC</span><br><span style="letter-spacing:-0.34px">charges</span></span></div>
<div class="c h" style="left:622px;top:224px;width:124px;height:59px;overflow:visible"><span><span style="letter-spacing:-0.30px">Rt. No</span></span></div>
<div class="c h" style="left:739px;top:224px;width:78px;height:59px;overflow:visible"><span><span style="letter-spacing:0.10px">Dt. Of</span><br><span style="letter-spacing:0.22px">payment</span></span></div>
<div class="c h" style="left:810px;top:224px;width:109px;height:59px;overflow:visible"><span><span style="letter-spacing:-0.28px">Remarks</span></span></div>
<div class="c r n" style="left:53px;top:284px;width:76px;height:19px;">1000228972</div>
<div class="c l x" style="left:130px;top:284px;width:126px;height:19px;letter-spacing:-0.01px;">Kanesh Sangma</div>
<div class="c l x" style="left:257px;top:284px;width:80px;height:19px;letter-spacing:0.28px;">Chibra</div>
<div class="c l ar" style="left:338px;top:284px;width:55px;height:19px;padding-bottom:1px;">DLT</div>
<div class="c r n" style="left:394px;top:284px;width:70px;height:19px;">272239</div>
<div class="c r n" style="left:465px;top:284px;width:49px;height:19px;">1</div>
<div class="c r n" style="left:515px;top:284px;width:56px;height:19px;">1090</div>
<div class="c r n" style="left:572px;top:284px;width:53px;height:19px;">150</div>
<div class="c r n" style="left:626px;top:284px;width:116px;height:19px;">556063</div>
<div class="c l n" style="left:743px;top:284px;width:70px;height:19px;letter-spacing:-0.11px;">19.03.2025</div>
<div class="c l x" style="left:814px;top:284px;width:101px;height:19px;letter-spacing:-0.96px;">DC_CR</div>
<div class="c r n" style="left:53px;top:304px;width:76px;height:20px;">1000226675</div>
<div class="c l x" style="left:130px;top:304px;width:126px;height:20px;letter-spacing:0.29px;">Rosangnawi Varte</div>
<div class="c l x" style="left:257px;top:304px;width:80px;height:20px;letter-spacing:0.36px;">Pillangkata</div>
<div class="c l ar" style="left:338px;top:304px;width:55px;height:20px;">DLT</div>
<div class="c r n" style="left:394px;top:304px;width:70px;height:20px;font-size:14.67px;letter-spacing:0;line-height:17px;">11111137</div>
<div class="c r n" style="left:465px;top:304px;width:49px;height:20px;">1</div>
<div class="c r n" style="left:515px;top:304px;width:56px;height:20px;">1,992</div>
<div class="c r n" style="left:572px;top:304px;width:53px;height:20px;">150</div>
<div class="c r n" style="left:626px;top:304px;width:116px;height:20px;">556071</div>
<div class="c l n" style="left:743px;top:304px;width:70px;height:20px;letter-spacing:-0.11px;">26.03.2025</div>
<div class="c l x" style="left:814px;top:304px;width:101px;height:20px;letter-spacing:-0.96px;">DC_CR</div>
<div class="c r n m" style="left:53px;top:325px;width:76px;height:79px;">1000229409</div>
<div class="c l x m" style="left:130px;top:325px;width:126px;height:79px;letter-spacing:0.10px;">Prakash Gurung</div>
<div class="c l x m" style="left:257px;top:325px;width:80px;height:79px;letter-spacing:0.31px;">Umtru C.M.S</div>
<div class="c l ar m" style="left:338px;top:325px;width:55px;height:79px;padding-bottom:3px;">DLT</div>
<div class="c r x m" style="left:394px;top:325px;width:70px;height:79px;">N/A</div>
<div class="c r n m" style="left:465px;top:325px;width:49px;height:79px;">2</div>
<div class="c r n m" style="left:515px;top:325px;width:56px;height:79px;">907</div>
<div class="c r n m" style="left:572px;top:325px;width:53px;height:79px;">150</div>
<div class="c r n m" style="left:626px;top:325px;width:116px;height:79px;">561988</div>
<div class="c l n m" style="left:743px;top:325px;width:70px;height:79px;letter-spacing:-0.11px;">05.03.2025</div>
<div class="c l x m" style="left:814px;top:325px;width:101px;height:79px;white-space:normal;line-height:20px;padding-top:2px;"><span><span style="letter-spacing:0.41px">Still in service</span><br><span style="letter-spacing:0.32px">at site and</span><br><span style="letter-spacing:0.66px">billing continue</span></span></div>
<div class="c tt" style="left:26px;top:445px;width:787px;height:19px">Consumer with Permanent Disconnection as on May 2025</div>
<div class="c h" style="left:22px;top:465px;width:34px;height:59px;overflow:visible"><span><span style="letter-spacing:0.20px">Sl.</span><br><span style="letter-spacing:0.19px">No.</span></span></div>
<div class="c h" style="left:49px;top:465px;width:84px;height:59px;overflow:visible"><span><span style="letter-spacing:-0.34px">ACCOUNT_</span><br><span style="letter-spacing:-0.50px">NO</span></span></div>
<div class="c h" style="left:126px;top:465px;width:134px;height:59px;overflow:visible"><span><span style="letter-spacing:-0.10px">CONSUMER_NAME</span></span></div>
<div class="c h" style="left:253px;top:465px;width:88px;height:59px;overflow:visible"><span><span style="letter-spacing:-1.08px">ADDRESS</span></span></div>
<div class="c h" style="left:334px;top:465px;width:63px;height:59px;overflow:visible"><span><span style="letter-spacing:-0.56px">TARIFF_</span><br><span style="letter-spacing:-0.19px">NAME</span></span></div>
<div class="c h" style="left:390px;top:465px;width:78px;height:59px;overflow:visible"><span><span style="letter-spacing:-0.45px">METER_N</span><br><span style="letter-spacing:-0.33px">UMBER</span></span></div>
<div class="c h" style="left:461px;top:465px;width:57px;height:59px;overflow:visible"><span><span style="letter-spacing:-0.54px">CONTR</span><br><span style="letter-spacing:-0.78px">ACT_L</span><br><span style="letter-spacing:-0.13px">OAD</span></span></div>
<div class="c h" style="left:511px;top:465px;width:64px;height:59px;overflow:visible"><span><span style="letter-spacing:-0.94px">bill</span><br><span style="letter-spacing:-0.00px">cleared</span></span></div>
<div class="c h" style="left:568px;top:465px;width:61px;height:59px;overflow:visible"><span><span style="letter-spacing:-1.64px">DC</span><br><span style="letter-spacing:-0.34px">charges</span></span></div>
<div class="c h" style="left:622px;top:465px;width:124px;height:59px;overflow:visible"><span><span style="letter-spacing:-0.30px">Rt. No</span></span></div>
<div class="c h" style="left:739px;top:465px;width:78px;height:59px;overflow:visible"><span><span style="letter-spacing:0.10px">Dt. Of</span><br><span style="letter-spacing:0.22px">payment</span></span></div>
<div class="c h" style="left:810px;top:465px;width:109px;height:59px;overflow:visible"><span><span style="letter-spacing:-0.28px">Remarks</span></span></div>
<div class="c r n" style="left:53px;top:525px;width:76px;height:19px;">1000227866</div>
<div class="c l x" style="left:130px;top:525px;width:126px;height:19px;letter-spacing:0.16px;">Bait Shakwa</div>
<div class="c l x" style="left:257px;top:525px;width:80px;height:19px;letter-spacing:0.62px;">9th mile</div>
<div class="c l ar" style="left:338px;top:525px;width:55px;height:19px;padding-bottom:1px;">CLT</div>
<div class="c r n" style="left:394px;top:525px;width:70px;height:19px;">14526507</div>
<div class="c r n" style="left:465px;top:525px;width:49px;height:19px;">1</div>
<div class="c r n" style="left:515px;top:525px;width:56px;height:19px;">153</div>
<div class="c r n" style="left:572px;top:525px;width:53px;height:19px;">150</div>
<div class="c r n" style="left:626px;top:525px;width:116px;height:19px;">2213010000326</div>
<div class="c l n" style="left:743px;top:525px;width:70px;height:19px;letter-spacing:-0.11px;">28.05.2025</div>
<div class="c l x" style="left:814px;top:525px;width:101px;height:19px;letter-spacing:-0.96px;">DC_CR</div>
<div class="c r n" style="left:53px;top:545px;width:76px;height:19px;">1000228019</div>
<div class="c l x" style="left:130px;top:545px;width:126px;height:19px;letter-spacing:0.16px;">Bait Shakwa</div>
<div class="c l x" style="left:257px;top:545px;width:80px;height:19px;letter-spacing:0.62px;">9th mile</div>
<div class="c l ar" style="left:338px;top:545px;width:55px;height:19px;padding-bottom:1px;">CLT</div>
<div class="c r n" style="left:394px;top:545px;width:70px;height:19px;">968687</div>
<div class="c r n" style="left:465px;top:545px;width:49px;height:19px;">1</div>
<div class="c r n" style="left:515px;top:545px;width:56px;height:19px;">138</div>
<div class="c r n" style="left:572px;top:545px;width:53px;height:19px;">150</div>
<div class="c r n" style="left:626px;top:545px;width:116px;height:19px;">2213010000325</div>
<div class="c l n" style="left:743px;top:545px;width:70px;height:19px;letter-spacing:-0.11px;">28.05.2025</div>
<div class="c l x" style="left:814px;top:545px;width:101px;height:19px;letter-spacing:-0.96px;">DC_CR</div>
<div class="c tt" style="left:26px;top:585px;width:787px;height:19px">Consumer with Permanent Disconnection as on August 2025</div>
<div class="c h" style="left:22px;top:605px;width:34px;height:59px;overflow:visible"><span><span style="letter-spacing:0.20px">Sl.</span><br><span style="letter-spacing:0.19px">No.</span></span></div>
<div class="c h" style="left:49px;top:605px;width:84px;height:59px;overflow:visible"><span><span style="letter-spacing:-0.34px">ACCOUNT_</span><br><span style="letter-spacing:-0.50px">NO</span></span></div>
<div class="c h" style="left:126px;top:605px;width:134px;height:59px;overflow:visible"><span><span style="letter-spacing:-0.10px">CONSUMER_NAME</span></span></div>
<div class="c h" style="left:253px;top:605px;width:88px;height:59px;overflow:visible"><span><span style="letter-spacing:-1.08px">ADDRESS</span></span></div>
<div class="c h" style="left:334px;top:605px;width:63px;height:59px;overflow:visible"><span><span style="letter-spacing:-0.56px">TARIFF_</span><br><span style="letter-spacing:-0.19px">NAME</span></span></div>
<div class="c h" style="left:390px;top:605px;width:78px;height:59px;overflow:visible"><span><span style="letter-spacing:-0.45px">METER_N</span><br><span style="letter-spacing:-0.33px">UMBER</span></span></div>
<div class="c h" style="left:461px;top:605px;width:57px;height:59px;overflow:visible"><span><span style="letter-spacing:-0.54px">CONTR</span><br><span style="letter-spacing:-0.78px">ACT_L</span><br><span style="letter-spacing:-0.13px">OAD</span></span></div>
<div class="c h" style="left:511px;top:605px;width:64px;height:59px;overflow:visible"><span><span style="letter-spacing:-0.94px">bill</span><br><span style="letter-spacing:-0.00px">cleared</span></span></div>
<div class="c h" style="left:568px;top:605px;width:61px;height:59px;overflow:visible"><span><span style="letter-spacing:-1.64px">DC</span><br><span style="letter-spacing:-0.34px">charges</span></span></div>
<div class="c h" style="left:622px;top:605px;width:124px;height:59px;overflow:visible"><span><span style="letter-spacing:-0.30px">Rt. No</span></span></div>
<div class="c h" style="left:739px;top:605px;width:78px;height:59px;overflow:visible"><span><span style="letter-spacing:0.10px">Dt. Of</span><br><span style="letter-spacing:0.22px">payment</span></span></div>
<div class="c h" style="left:810px;top:605px;width:109px;height:59px;overflow:visible"><span><span style="letter-spacing:-0.28px">Remarks</span></span></div>
<div class="c r n" style="left:53px;top:665px;width:76px;height:19px;">1000230069</div>
<div class="c l x" style="left:130px;top:665px;width:126px;height:19px;letter-spacing:-0.13px;">Boris C Gashnga</div>
<div class="c l x" style="left:257px;top:665px;width:80px;height:19px;letter-spacing:0.88px;">Amjok</div>
<div class="c l ar" style="left:338px;top:665px;width:55px;height:19px;padding-bottom:1px;">DLT</div>
<div class="c r n" style="left:394px;top:665px;width:70px;height:19px;">4646384</div>
<div class="c r n" style="left:465px;top:665px;width:49px;height:19px;">1</div>
<div class="c r n" style="left:515px;top:665px;width:56px;height:19px;">3393</div>
<div class="c r n" style="left:572px;top:665px;width:53px;height:19px;">150</div>
<div class="c r n" style="left:626px;top:665px;width:116px;height:19px;">2211010000725</div>
<div class="c l n" style="left:743px;top:665px;width:70px;height:19px;letter-spacing:-0.11px;">11.08.2025</div>
<div class="c l x" style="left:814px;top:665px;width:101px;height:19px;letter-spacing:-0.96px;">DC_CR</div>
<div class="bl" style="left:26px;top:282px;width:1320px;height:3px"></div>
<div class="a" style="left:27px;top:283px;width:888px;height:1px;background:#fff"></div>
<div class="bl" style="left:26px;top:302px;width:1320px;height:3px"></div>
<div class="a" style="left:27px;top:303px;width:888px;height:1px;background:#fff"></div>
<div class="bl" style="left:26px;top:282px;width:1px;height:23px"></div>
<div class="a" style="left:26px;top:301px;width:7px;height:5px;background:#fff"></div>
<div class="bl" style="left:27px;top:301px;width:5px;height:2px"></div>
<div class="bl" style="left:27px;top:304px;width:5px;height:2px"></div>
<div class="a" style="left:0;top:164px;width:26px;height:518px;background:#e1e5ea"></div>
<div class="rh" style="top:184px;height:20px;border-bottom:1px solid #b4bac3;border-right:1px solid #b4bac3;width:26px;">31</div>
<div class="rh" style="top:204px;height:20px;border-bottom:1px solid #b4bac3;border-right:1px solid #b4bac3;width:26px;">32</div>
<div class="rh" style="top:224px;height:60px;border-bottom:1px solid #b4bac3;border-right:1px solid #b4bac3;width:26px;">33</div>
<div class="rh" style="top:284px;height:20px;border-bottom:1px solid #b4bac3;border-right:1px solid #b4bac3;width:26px;background:#ababab;">34</div>
<div class="rh" style="top:304px;height:21px;border-bottom:1px solid #b4bac3;border-right:1px solid #b4bac3;width:26px;">35</div>
<div class="rh" style="top:325px;height:80px;border-bottom:1px solid #b4bac3;border-right:1px solid #b4bac3;width:26px;">36</div>
<div class="rh" style="top:405px;height:20px;border-bottom:1px solid #b4bac3;border-right:1px solid #b4bac3;width:26px;">37</div>
<div class="rh" style="top:425px;height:20px;border-bottom:1px solid #b4bac3;border-right:1px solid #b4bac3;width:26px;">38</div>
<div class="rh" style="top:445px;height:20px;border-bottom:1px solid #b4bac3;border-right:1px solid #b4bac3;width:26px;">39</div>
<div class="rh" style="top:465px;height:60px;border-bottom:1px solid #b4bac3;border-right:1px solid #b4bac3;width:26px;">40</div>
<div class="rh" style="top:525px;height:20px;border-bottom:1px solid #b4bac3;border-right:1px solid #b4bac3;width:26px;">41</div>
<div class="rh" style="top:545px;height:20px;border-bottom:1px solid #b4bac3;border-right:1px solid #b4bac3;width:26px;">42</div>
<div class="rh" style="top:565px;height:20px;border-bottom:1px solid #b4bac3;border-right:1px solid #b4bac3;width:26px;">43</div>
<div class="rh" style="top:585px;height:20px;border-bottom:1px solid #b4bac3;border-right:1px solid #b4bac3;width:26px;">44</div>
<div class="rh" style="top:605px;height:60px;border-bottom:1px solid #b4bac3;border-right:1px solid #b4bac3;width:26px;">45</div>
<div class="rh" style="top:665px;height:20px;border-bottom:1px solid #b4bac3;border-right:1px solid #b4bac3;width:26px;">46</div>
<div class="a" style="left:0;top:164px;width:26px;height:20px;background:#e4e7eb;border-right:1px solid #e5a83a;border-bottom:1px solid #b4bac3"></div>
<svg class="a" style="left:10px;top:169px" width="12" height="12"><path d="M11 0V11H0Z" fill="#bfc4c9"/></svg>
<div class="ch" style="left:26px;width:27px">A</div>
<div class="ch" style="left:53px;width:77px">B</div>
<div class="ch" style="left:130px;width:127px">C</div>
<div class="ch" style="left:257px;width:81px">D</div>
<div class="ch" style="left:338px;width:56px">E</div>
<div class="ch" style="left:394px;width:71px">F</div>
<div class="ch" style="left:465px;width:50px">G</div>
<div class="ch" style="left:515px;width:57px">H</div>
<div class="ch" style="left:572px;width:54px">I</div>
<div class="ch" style="left:626px;width:117px">J</div>
<div class="ch" style="left:743px;width:71px">K</div>
<div class="ch" style="left:814px;width:102px">L</div>
<div class="ch" style="left:916px;width:77px">M</div>
<div class="ch" style="left:993px;width:61px">N</div>
<div class="ch" style="left:1054px;width:61px">O</div>
<div class="ch" style="left:1115px;width:61px">P</div>
<div class="ch" style="left:1176px;width:61px">Q</div>
<div class="ch" style="left:1237px;width:61px">R</div>
<div class="ch" style="left:1298px;width:61px">S</div>
</div></div>
<div class="a" style="left:1346px;top:164px;width:17px;height:518px;background:#d9dde5"></div>
<div class="a" style="left:1347px;top:164px;width:15px;height:8px;background:#fff;border:1px solid #8d949e"></div>
<div class="a" style="left:1351px;top:167px;width:7px;height:1px;background:#777"></div>
<svg class="a" style="left:1349px;top:178px" width="10" height="6" viewBox="0 0 10 6"><path d="M0 6h10L5 0z" fill="#444"/></svg>
<svg class="a" style="left:1349px;top:671px" width="10" height="6" viewBox="0 0 10 6"><path d="M0 0h10L5 6z" fill="#444"/></svg>
<div class="a" style="left:1346px;top:444px;width:15px;height:136px;background:linear-gradient(90deg,#f2f4f8,#dfe3ea);border:1px solid #8f97a5;border-radius:2px"></div>
<div class="a" style="left:1350px;top:508px;width:8px;height:1px;background:#7a8390"></div>
<div class="a" style="left:1350px;top:510px;width:8px;height:1px;background:#7a8390"></div>
<div class="a" style="left:1350px;top:512px;width:8px;height:1px;background:#7a8390"></div>
<div class="a" style="left:1350px;top:514px;width:8px;height:1px;background:#7a8390"></div>
<div class="a" style="left:0;top:682px;width:1366px;height:17px;background:#d9dde4"></div>
<div class="a" style="left:0;top:697px;width:1366px;height:2px;background:linear-gradient(#8f97a3,#aab1bb)"></div>
<svg class="a" style="left:5.5px;top:686px" width="7" height="7" viewBox="0 0 7 7"><path d="M0 0h1.300v7H0zM6.500 0v7L1.500 3.500z" fill="#444"/></svg>
<svg class="a" style="left:22px;top:686px" width="7" height="7" viewBox="0 0 7 7"><path d="M5 0v7L0 3.500z" fill="#444"/></svg>
<svg class="a" style="left:36.5px;top:686px" width="7" height="7" viewBox="0 0 7 7"><path d="M0 0v7l5-3.500z" fill="#444"/></svg>
<svg class="a" style="left:50px;top:686px" width="7" height="7" viewBox="0 0 7 7"><path d="M0 0v7l5-3.500zM5.200 0h1.300v7H5.200z" fill="#444"/></svg>
<svg class="a" style="left:128px;top:681px" width="130" height="18"><path d="M5.500 0V13.500L2.500 16.500H111.500L125 1V0z" fill="#fff"/><path d="M5.500 1V13.500L2.500 16.500M111.500 16.500L125 1.500" fill="none" stroke="#8f97a3" stroke-width="1"/></svg>
<svg class="a" style="left:58px;top:681px" width="10" height="18"><path d="M4.500 1V13.500L7.500 16.500" fill="none" stroke="#8f97a3" stroke-width="1"/></svg>
<svg class="a" style="left:274.6px;top:681px" width="18" height="18"><path d="M0 16.500H3L14 1.500" fill="none" stroke="#8f97a3" stroke-width="1"/></svg>
<svg class="a" style="left:332.0px;top:681px" width="18" height="18"><path d="M0 16.500H3L14 1.500" fill="none" stroke="#8f97a3" stroke-width="1"/></svg>
<svg class="a" style="left:393.0px;top:681px" width="18" height="18"><path d="M0 16.500H3L14 1.500" fill="none" stroke="#8f97a3" stroke-width="1"/></svg>
<svg class="a" style="left:529.8px;top:681px" width="18" height="18"><path d="M0 16.500H3L14 1.500" fill="none" stroke="#8f97a3" stroke-width="1"/></svg>
<svg class="a" style="left:590.8px;top:681px" width="18" height="18"><path d="M0 16.500H3L14 1.500" fill="none" stroke="#8f97a3" stroke-width="1"/></svg>
<svg class="a" style="left:650.5px;top:681px" width="18" height="18"><path d="M0 16.500H3L14 1.500" fill="none" stroke="#8f97a3" stroke-width="1"/></svg>
<svg class="a" style="left:709.3px;top:681px" width="18" height="18"><path d="M0 16.500H3L14 1.500" fill="none" stroke="#8f97a3" stroke-width="1"/></svg>
<svg class="a" style="left:769.0px;top:681px" width="18" height="18"><path d="M0 16.500H3L14 1.500" fill="none" stroke="#8f97a3" stroke-width="1"/></svg>
<div class="t" style="left:74.5px;top:685px;font-size:12.500px;letter-spacing:-0.74px;color:#5d6673;">DC_Cons</div>
<div class="t" style="left:142.9px;top:685px;font-size:12.500px;letter-spacing:0.24px;color:#323a47;font-weight:bold;">Permanent_DC</div>
<div class="t" style="left:250.5px;top:685px;font-size:12.500px;letter-spacing:-0.23px;color:#5d6673;">OTS</div>
<div class="t" style="left:292.5px;top:685px;font-size:12.500px;letter-spacing:-1.07px;color:#5d6673;">DC_NP</div>
<div class="t" style="left:349.5px;top:685px;font-size:12.500px;letter-spacing:0.06px;color:#5d6673;">Sheet1</div>
<div class="t" style="left:412.5px;top:685px;font-size:12.500px;letter-spacing:-0.01px;color:#5d6673;">Re-connected cons.</div>
<div class="t" style="left:546.5px;top:685px;font-size:12.500px;letter-spacing:0.06px;color:#5d6673;">Sheet2</div>
<div class="t" style="left:606.5px;top:685px;font-size:12.500px;letter-spacing:0.15px;color:#5d6673;">Sheet3</div>
<div class="t" style="left:666.5px;top:685px;font-size:12.500px;letter-spacing:0.06px;color:#5d6673;">Sheet4</div>
<div class="t" style="left:726.5px;top:685px;font-size:12.500px;letter-spacing:0.15px;color:#5d6673;">Sheet5</div>
<div class="t" style="left:786.5px;top:685px;font-size:12.500px;letter-spacing:-0.41px;color:#5d6673;">She</div>
<div class="a" style="left:808px;top:682px;width:558px;height:16px;background:#e3e6eb"></div>
<div class="a" style="left:809px;top:683px;width:7px;height:14px;background:#fff;border:1px solid #8c95a2;border-radius:1px"></div>
<div class="a" style="left:812px;top:687px;width:1px;height:6px;background:#666"></div>
<svg class="a" style="left:820px;top:686px" width="6" height="9" viewBox="0 0 6 9"><path d="M6 0v9L0 4.500z" fill="#444"/></svg>
<div class="a" style="left:833px;top:683px;width:375px;height:15px;background:linear-gradient(#f6f7fa,#dde1e7);border:1px solid #9aa3b0;border-radius:2px"></div>
<div class="a" style="left:1016px;top:687px;width:1px;height:7px;background:#7a8390"></div>
<div class="a" style="left:1018px;top:687px;width:1px;height:7px;background:#7a8390"></div>
<div class="a" style="left:1020px;top:687px;width:1px;height:7px;background:#7a8390"></div>
<div class="a" style="left:1022px;top:687px;width:1px;height:7px;background:#7a8390"></div>
<svg class="a" style="left:1327px;top:686px" width="6" height="9" viewBox="0 0 6 9"><path d="M0 0v9l6-4.500z" fill="#444"/></svg>
<div class="a" style="left:1338px;top:683px;width:8px;height:14px;background:#fff;border:1px solid #8c95a2;border-radius:1px"></div>
<div class="a" style="left:1341px;top:687px;width:1px;height:6px;background:#666"></div>
<div class="a" style="left:1346px;top:682px;width:16px;height:16px;background:#dde1e8"></div>
<div class="a" style="left:1346px;top:682px;width:16px;height:1px;background:#c3c8d0"></div>
<div class="a" style="left:1362px;top:164px;width:1px;height:534px;background:#a3a9b3"></div>
<div class="a" style="left:1363px;top:164px;width:3px;height:534px;background:#eef0f3"></div>
<div class="a" style="left:0;top:699px;width:1366px;height:22px;background:linear-gradient(#e4e7eb 0%,#d6dae0 45%,#c3c8d0 100%)"></div>
<div class="a" style="left:0;top:720px;width:1366px;height:1px;background:#a7adb6"></div>
<div class="u" style="left:8px;top:702px;color:#333;letter-spacing:-0.23px">Select destination and press ENTER or choose Paste</div>
<div class="a" style="left:680px;top:700px;width:2px;height:19px;background:linear-gradient(90deg,#8e96a2 50%,#f2f4f6 50%)"></div>
<div class="u" style="left:834px;top:702px;color:#333;letter-spacing:-0.28px">Average: 166843085.8</div>
<div class="u" style="left:960px;top:702px;color:#333">Count: 11</div>
<div class="u" style="left:1026px;top:702px;color:#333;letter-spacing:-0.35px">Sum: 1001058515</div>
<div class="a" style="left:1123px;top:700px;width:2px;height:19px;background:linear-gradient(90deg,#8e96a2 50%,#f2f4f6 50%)"></div>
<div class="a" style="left:1129px;top:700px;width:18px;height:19px;border:1px solid #c2a03c;border-radius:3px;background:linear-gradient(#ffe9a6,#ffd561)"></div>
<svg class="a" style="left:1132px;top:704px" width="12" height="11" viewBox="0 0 12 11"><rect x="0.500" y="0.500" width="11" height="10" fill="#fff" stroke="#555"/><path d="M0 3.500h12M0 7h12M4 0v11M8 0v11" stroke="#555"/></svg>
<svg class="a" style="left:1150px;top:703px" width="14" height="12" viewBox="0 0 14 12"><rect x="0.500" y="0.500" width="13" height="11" fill="#eceef2" stroke="#555"/><rect x="3.500" y="2.500" width="7" height="7" fill="#fff" stroke="#555"/><path d="M5 5h4M5 7h4" stroke="#888"/></svg>
<svg class="a" style="left:1169px;top:703px" width="14" height="12" viewBox="0 0 14 12"><rect x="0.500" y="0.500" width="13" height="11" fill="#d5d8de" stroke="#555"/><rect x="2.500" y="0.500" width="4" height="6" fill="#fff" stroke="#555"/><rect x="6.500" y="0.500" width="5" height="6" fill="#fff" stroke="#555"/></svg>
<div class="u" style="left:1195px;top:702px;color:#333;letter-spacing:-0.6px">100%</div>
<div class="a" style="left:1247px;top:709px;width:98px;height:1px;background:#8a929e"></div>
<div class="a" style="left:1247px;top:710px;width:98px;height:1px;background:#f4f5f7"></div>
<svg class="a" style="left:1229.5px;top:701px" width="16" height="16" viewBox="0 0 16 16"><circle cx="8" cy="8" r="7.300" fill="#f3f4f6" stroke="#7d8591"/><path d="M4 8h8" stroke="#3a3a3a" stroke-width="1.400"/></svg>
<svg class="a" style="left:1346px;top:701px" width="16" height="16" viewBox="0 0 16 16"><circle cx="8" cy="8" r="7.300" fill="#f3f4f6" stroke="#7d8591"/><path d="M4 8h8" stroke="#3a3a3a" stroke-width="1.400"/><path d="M8 4v8" stroke="#3a3a3a" stroke-width="1.400"/></svg>
<svg class="a" style="left:1292px;top:701px" width="10" height="15" viewBox="0 0 10 15"><path d="M.500.500h8v8.500l-4 5-4-5z" fill="#eef0f3" stroke="#6f7783"/></svg>
<div class="a" style="left:0;top:721px;width:1366px;height:47px;background:#cfe5ec"></div>
<svg class="a" style="left:18px;top:735px" width="27" height="20" viewBox="0 0 27 20"><defs><linearGradient id="cl" x1="0" y1="0" x2="0" y2="1"><stop offset="0" stop-color="#f4f8ff"/><stop offset=".55" stop-color="#cfdcf8"/><stop offset="1" stop-color="#7fa4ee"/></linearGradient></defs><circle cx="19" cy="7" r="4.500" fill="#f59a2a"/><path d="M5.500 19a5 5 0 01.300-10 7 7 0 0113.200 1.200 4.500 4.500 0 011 8.800z" fill="url(#cl)"/></svg>
<div class="a" style="left:30px;top:726px;width:16px;height:16px;border-radius:8px;background:#c42b1c"></div>
<div class="t" style="left:30px;top:728px;width:16px;text-align:center;font-size:11px;color:#fff;font-weight:bold">3</div>
<div class="t" style="left:50px;top:731px;font-size:11.500px;color:#1b1b1b">27°C</div>
<div class="t" style="left:50px;top:746px;font-size:12.500px;color:#4a5358">Mostly cloudy</div>
<svg class="a" style="left:406px;top:733px" width="23" height="23" viewBox="0 0 23 23"><defs><linearGradient id="wg" x1="0" y1="0" x2="1" y2="1"><stop offset="0" stop-color="#35b8f5"/><stop offset="1" stop-color="#0a6fd6"/></linearGradient></defs><rect x="0" y="0" width="11" height="11" fill="url(#wg)"/><rect x="12" y="0" width="11" height="11" fill="url(#wg)"/><rect x="0" y="12" width="11" height="11" fill="url(#wg)"/><rect x="12" y="12" width="11" height="11" fill="url(#wg)"/></svg>
<div class="a" style="left:443px;top:728px;width:219px;height:32px;border-radius:16px;background:#edf6f8;border:1px solid #c6dbe2"></div>
<svg class="a" style="left:453px;top:736px" width="16" height="16" viewBox="0 0 16 16"><circle cx="6.500" cy="6.500" r="5.300" fill="none" stroke="#222" stroke-width="1.600"/><path d="M10.500 10.500l4.500 4.500" stroke="#222" stroke-width="1.800" stroke-linecap="round"/></svg>
<div class="t" style="left:479px;top:737px;font-size:13px;color:#4a4f54">Search</div>
<svg class="a" style="left:609px;top:733px" width="48" height="24" viewBox="0 0 48 24"><defs><linearGradient id="mt" x1="0" y1="0" x2="0" y2="1"><stop offset="0" stop-color="#6ab0fa"/><stop offset=".55" stop-color="#5a8af2"/><stop offset="1" stop-color="#4a4ee0"/></linearGradient><linearGradient id="og" x1="0" y1="0" x2="1" y2="1"><stop offset="0" stop-color="#ff9a4a"/><stop offset="1" stop-color="#ee6a2a"/></linearGradient></defs><path d="M1.500 16.500l10-.5 12 5.500-8 .5z" fill="#f4b4d6"/><path d="M22 21.500l25-5.500-1-1-24 5z" fill="#f2c49a"/><path d="M2 2l5 7 1-7.500 3 8.500-2 4-6-2 4-1.500z" fill="#4fae78"/><path d="M1.500 9l6 2-2 3z" fill="#3f9a68"/><rect x="10" y="2.500" width="18" height="7.500" rx="1.500" fill="url(#og)"/><rect x="7.500" y="10" width="10" height="7.500" rx="1.500" fill="url(#og)"/><path d="M16 10.500L41.500 8c2.500-.2 4.500 1.500 4.500 4.500s-1.500 5-4 5.300L17 21.500z" fill="url(#mt)"/><ellipse cx="16.500" cy="16" rx="4.300" ry="5.500" fill="#5a6af0"/><ellipse cx="16.500" cy="16" rx="2.500" ry="3.300" fill="#3a3ad0"/><path d="M16.500 13.500a2 2.500 0 000 5" fill="none" stroke="#8fa8fa" stroke-width=".8"/></svg>
<div class="a" style="left:674px;top:739px;width:18px;height:16px;border-radius:2px;background:linear-gradient(160deg,#4a4a4a,#111)"></div>
<div class="a" style="left:680px;top:733px;width:18px;height:16px;border-radius:2px;background:linear-gradient(160deg,rgba(255,255,255,.98),rgba(225,228,232,.78))"></div>
<svg class="a" style="left:717px;top:732px" width="26" height="23" viewBox="0 0 26 23"><defs><linearGradient id="cg1" x1="0" y1="0" x2="0" y2="1"><stop offset="0" stop-color="#1a7fe8"/><stop offset=".35" stop-color="#2fb8c8"/><stop offset=".65" stop-color="#7fd04a"/><stop offset="1" stop-color="#f8c81a"/></linearGradient><linearGradient id="cg2" x1="0" y1="0" x2="0" y2="1"><stop offset="0" stop-color="#b45af0"/><stop offset=".4" stop-color="#f0508a"/><stop offset="1" stop-color="#fb8a2a"/></linearGradient></defs><path d="M7.500 1h8c1.800 0 2.800 1 3.300 2.800L20 8h-5.500c-1.500 0-2.500.8-3 2.300L9.500 17H4.500C1.500 17 .2 15 .8 12.500L3 4.500C3.700 2 5.200 1 7.500 1z" fill="url(#cg1)"/><path d="M18.500 22h-8c-1.800 0-2.800-1-3.300-2.800L6.500 16.500h5c1.500 0 2.500-.8 3-2.300L16.500 7.500h5c3 0 4.300 2 3.700 4.500L23 18.500c-.7 2.500-2.200 3.500-4.500 3.500z" fill="url(#cg2)"/><path d="M15 1c1.800 0 3 1 3.500 2.800L20 8h-4z" fill="#1560d0"/></svg>
<svg class="a" style="left:761px;top:732px" width="26" height="24" viewBox="0 0 26 24"><circle cx="21" cy="5.700" r="2.400" fill="#5059c9"/><rect x="17.500" y="9" width="7.500" height="10.500" rx="3" fill="#5059c9"/><circle cx="13.600" cy="5" r="3.600" fill="#7b83eb"/><path d="M8.500 9.500h13v8c0 3.500-3 5.500-6.500 5.500s-6.500-2-6.500-5.500z" fill="#7b83eb"/><rect x="1" y="6" width="12" height="12" rx="1.500" fill="#4b53bc"/><text x="7" y="15.500" font-family="Liberation Sans,sans-serif" font-weight="bold" font-size="9.500" text-anchor="middle" fill="#fff">T</text></svg>
<svg class="a" style="left:805px;top:732px" width="26" height="23" viewBox="0 0 26 23"><defs><linearGradient id="fg" x1="0" y1="0" x2="0" y2="1"><stop offset="0" stop-color="#ffd65a"/><stop offset="1" stop-color="#ffc83a"/></linearGradient></defs><path d="M1 3C1 2 1.800 1.200 2.800 1.200h6.500l2.200 2.300H23c1 0 1.800.8 1.800 1.800V9H1z" fill="#eeb020"/><rect x="1" y="4.500" width="23.800" height="17.500" rx="1.800" fill="url(#fg)"/><path d="M5 22v-4.500c0-1 .8-1.800 1.800-1.800h11.400c1 0 1.800.8 1.800 1.800V22z" fill="#2f8ae6"/><rect x="8" y="18" width="9" height="1.800" rx=".9" fill="#1a6ac8"/></svg>
<svg class="a" style="left:849px;top:731px" width="26" height="26" viewBox="0 0 26 26"><defs><linearGradient id="eg" x1="0" y1="0" x2="0" y2="1"><stop offset="0" stop-color="#2bb0ea"/><stop offset=".55" stop-color="#1a80d8"/><stop offset="1" stop-color="#0d52a4"/></linearGradient><linearGradient id="eg2" x1="0" y1="1" x2="1" y2="0"><stop offset="0" stop-color="#22b4c8"/><stop offset=".5" stop-color="#3fd28a"/><stop offset="1" stop-color="#8be858"/></linearGradient></defs><circle cx="13" cy="13" r="12" fill="url(#eg)"/><path d="M2 9C4 3.500 9 1 13.500 1 20 1 25 6 25 12c0 3.500-2.500 6-6 6-2.500 0-4.500-1-4.500-2.500 0-1 1-1.500 1-3 0-2.500-2.500-4.500-5.500-4.500C6.500 8 3.500 8 2 9z" fill="url(#eg2)"/><path d="M9.500 13.500c0-3 2.500-5 5.500-4.500 1.500.5 2 2 1.500 3.500-.5 1-1 1.500-1 2.500 0 1.800 2.500 3 5 2.500 1.500-.3 3-1.200 4-2.500-1 4-4.500 7-9 7-3.500 0-6-3.500-6-8.500z" fill="#cfe5ec"/><path d="M9.500 13.500c0 5 3.500 9.500 8.500 10-7 2.500-14-2-15.500-8 .5-3.500 4-6 7.500-6-.5 1.200-.5 2.500-.5 4z" fill="#1468c0" opacity=".55"/></svg>
<div class="a" style="left:887px;top:725px;width:34px;height:39px;border-radius:4px;background:#e6f2f6;border:1px solid #d9e9ee"></div>
<div class="a" style="left:922px;top:725px;width:4px;height:39px;border-radius:0 4px 4px 0;background:#e0eef3"></div>
<svg class="a" style="left:893px;top:731px" width="24" height="24" viewBox="0 0 24 24"><defs><linearGradient id="xg" x1="0" y1="0" x2="1" y2="1"><stop offset="0" stop-color="#2f8a3a"/><stop offset="1" stop-color="#8fca6a"/></linearGradient></defs><path d="M4.500 1H22.500V22.500H1V4.500z" fill="#f4f9f1" stroke="#2f7d32" stroke-width="1.200"/><path d="M2.500 5L5 2.500H12V21H2.500z" fill="#cfe5c9"/><path d="M4 4.500L9.300 11.500 4 18.500h3.300l3.700-5 3.700 5H18l-5.300-7L18 4.500h-3.300L11 9.300 7.300 4.500z" fill="url(#xg)"/><path d="M13 12.500l9.500 2.500-2 6-9.500-2z" fill="#f2f8ee" stroke="#86b886" stroke-width=".6"/><path d="M14 15l7 1.800M13.500 17l7 1.800" stroke="#9fcf9a" stroke-width=".7"/></svg>
<div class="a" style="left:898px;top:760px;width:16px;height:3px;border-radius:1.500px;background:#1a73d9"></div>
<svg class="a" style="left:937px;top:731px" width="28" height="26" viewBox="0 0 28 26"><path d="M13 8l8-3.500 3.500 3.500-8 4z" fill="#3c3c3c"/><path d="M7 13.500l14.500-5.500 4.500 4v6.500l-13 5.500-6-4z" fill="#1c1c1c"/><path d="M7 13.500l6 4 13-5.500" fill="none" stroke="#4a4a4a" stroke-width=".8"/><path d="M9 20.500l4 2.800 8-3.400v2.200l-8 3.400-4-2.800z" fill="#3a3a3a"/><circle cx="8.300" cy="6.500" r="6.200" fill="#3f8ae8"/><path d="M9 11.500l3.500 3.500-.5-4.500z" fill="#3f8ae8"/><text x="8.500" y="10.500" font-family="Liberation Serif,serif" font-style="italic" font-weight="bold" font-size="11" text-anchor="middle" fill="#fff">i</text></svg>
<div class="a" style="left:814px;top:760px;width:6px;height:3px;border-radius:1.500px;background:#7d8589"></div>
<div class="a" style="left:858px;top:760px;width:6px;height:3px;border-radius:1.500px;background:#7d8589"></div>
<div class="a" style="left:947px;top:760px;width:6px;height:3px;border-radius:1.500px;background:#7d8589"></div>
<svg class="a" style="left:1154px;top:740px" width="12" height="8" viewBox="0 0 12 8"><path d="M1 7l5-5.500L11 7" fill="none" stroke="#222" stroke-width="1.500"/></svg>
<div class="t" style="left:1186px;top:731px;font-size:11px;color:#1b1b1b;width:24px;text-align:center">ENG</div>
<div class="t" style="left:1186px;top:747px;font-size:11px;color:#1b1b1b;width:24px;text-align:center">IN</div>
<svg class="a" style="left:1227px;top:735px" width="17" height="18" viewBox="0 0 17 18"><rect x="0.700" y="1.700" width="11" height="9.500" rx="1" fill="none" stroke="#222" stroke-width="1.200"/><path d="M6 11.500v3M3 15h7" stroke="#222" stroke-width="1.200"/><rect x="12.500" y="1" width="3" height="4.500" rx="1" fill="none" stroke="#222"/><path d="M14 5.500V16" stroke="#222"/></svg>
<svg class="a" style="left:1253px;top:738px" width="16" height="13" viewBox="0 0 16 13"><path d="M1 4.500h2L6 1.500v8L3 7H1z" fill="none" stroke="#222" stroke-width="1.100"/><circle cx="10.500" cy="8.500" r="3.800" fill="#222"/><path d="M9 7l3 3M12 7l-3 3" stroke="#cfe5ec" stroke-width="1.100"/></svg>
<div class="t" style="left:1280px;top:730px;width:67px;text-align:right;font-size:12px;color:#1b1b1b;letter-spacing:-0.3px">12:01</div>
<div class="t" style="left:1280px;top:747px;width:67px;text-align:right;font-size:12px;color:#1b1b1b">09-03-2026</div>
</body></html>
